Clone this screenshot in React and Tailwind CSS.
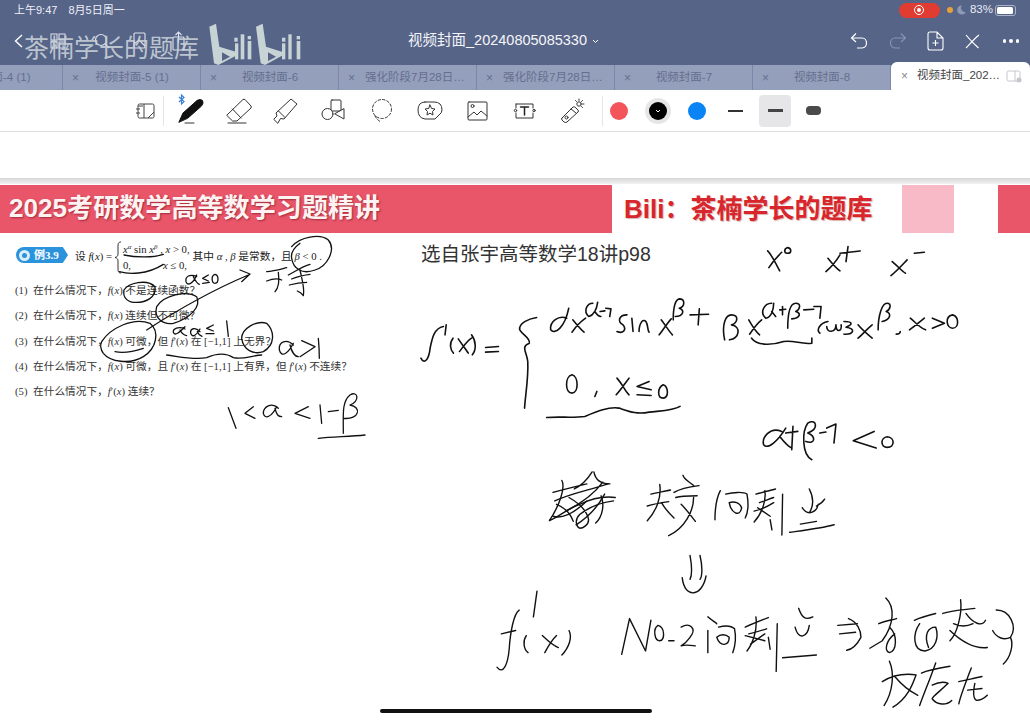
import React from 'react';

const tabs = [
  { t: '视频封面-5 (1)' },
  { t: '视频封面-6' },
  { t: '强化阶段7月28日…', long: true },
  { t: '强化阶段7月28日…', long: true },
  { t: '视频封面-7' },
  { t: '视频封面-8' },
];

const questions = [
  ['(1)', <>在什么情况下，<i>f</i>(<i>x</i>) 不是连续函数？</>],
  ['(2)', <>在什么情况下，<i>f</i>(<i>x</i>) 连续但不可微？</>],
  ['(3)', <>在什么情况下，<i>f</i>(<i>x</i>) 可微，但 <i>f</i>′(<i>x</i>) 在 [−1,1] 上无界？</>],
  ['(4)', <>在什么情况下，<i>f</i>(<i>x</i>) 可微，且 <i>f</i>′(<i>x</i>) 在 [−1,1] 上有界，但 <i>f</i>′(<i>x</i>) 不连续？</>],
  ['(5)', <>在什么情况下，<i>f</i>′(<i>x</i>) 连续？</>],
];

const Ico = ({ children, w = 26, h = 26 }) => (
  <svg width={w} height={h} viewBox={`0 0 ${w} ${h}`} fill="none" stroke="#333" strokeWidth="1" strokeLinecap="round" strokeLinejoin="round">
    {children}
  </svg>
);

const ToolIcons = [
  <Ico key="pen">
    <path d="M1 24 L5 15 L19 2.5 Q22 0.5 24.5 2.5 Q26 5 23.5 8 L10 20 Z" fill="#111" stroke="#111" />
    <path d="M7 25 H16" stroke="#333" />
  </Ico>,
  <Ico key="eraser">
    <path d="M1 17 L17 1.5 Q18 1 19 1.5 L25 8 Q25.5 9 25 10 L11 23 H7 Z" />
    <path d="M6.5 11 L15 20" />
    <path d="M2 25 H20" />
  </Ico>,
  <Ico key="highlighter">
    <path d="M1 21 L4 18 L3 15 L18 1 L24 6 L11 21 L7.5 20.5 L5 25 Z" />
    <path d="M5.5 13 L12 19.5" />
  </Ico>,
  <Ico key="shapes">
    <rect x="10" y="2" width="10" height="11" rx="1" />
    <circle cx="6.5" cy="16" r="5.5" fill="#fff" />
    <path d="M23 11 V21 L14 16 Z" fill="#fff" />
  </Ico>,
  <Ico key="lasso">
    <circle cx="13" cy="11" r="9.5" strokeDasharray="2.5 2" />
    <path d="M6 18 Q8 22 12 24" strokeDasharray="2.5 2" />
  </Ico>,
  <Ico key="sticker">
    <path d="M8 4 H17 Q25 4 25 12 Q25 15 22 17 L18 21 H8 Q1 20 1 12 Q1 4 8 4 Z" />
    <path d="M13 7 L14.6 10.5 L18 11 L15.5 13.5 L16 17 L13 15.2 L10 17 L10.5 13.5 L8 11 L11.4 10.5 Z" />
  </Ico>,
  <Ico key="image">
    <rect x="3" y="4" width="19" height="18" rx="1" />
    <circle cx="7.5" cy="8" r="1.5" />
    <path d="M3 19 L9 14 L12 17 L16 13 L22 18" />
  </Ico>,
  <Ico key="text">
    <path d="M4 6 H21 V10 M21 15 V20 H4 V15 M4 10 V6" />
    <circle cx="22" cy="12.5" r="1.2" />
    <circle cx="3.5" cy="12.5" r="1.2" />
    <path d="M8.5 9 H16.5 M12.5 9 V17" strokeWidth="1.5" stroke="#222" />
  </Ico>,
  <Ico key="laser">
    <path d="M2 20 L13 9 Q14 8 16 10 L18 12 Q19 13 18 14 L7 24 Q6 25 4 24 L2 22 Q1 21 2 20 Z" />
    <circle cx="6.5" cy="19.5" r="1.5" />
    <path d="M11 11 L16 15" />
    <circle cx="19" cy="6" r="2.2" />
    <path d="M19 1 V2.5 M24 6 H22.5 M22.5 2.5 L21.5 3.5 M15.5 2.5 L16.5 3.5 M22.5 9.5 L21.5 8.5" />
  </Ico>,
];

const Ink = ({ t, sx, sy, w = 1.6, d }) => (
  <g transform={`translate(${t}) scale(${sx} ${sy})`}>
    {d.map((p, i) => (
      <path key={i} d={p} fill="none" stroke="#111" strokeWidth={w} strokeLinecap="round" strokeLinejoin="round" vectorEffect="non-scaling-stroke" />
    ))}
  </g>
);

// strokes for the problem statement, coords from a 3x crop at (0,175)
const leftInk = [
  'M372 240 C410 248 460 248 490 238',
  'M358 290 C385 298 440 300 490 268',
  'M875 215 C900 185 960 175 985 195 C1010 225 980 275 945 285 C905 300 880 280 875 250 C872 235 880 220 900 205',
  'M590 305 C570 295 555 305 558 320 C562 335 580 325 590 300 M580 305 C585 315 590 325 598 328',
  'M625 300 L608 310 L625 318 M608 325 L628 322 M645 298 C632 302 635 325 645 325 C657 325 657 300 645 298',
  'M440 465 C540 400 650 340 745 300 M720 285 L750 297 L725 320',
  'M800 290 C825 288 850 280 860 278 M800 318 C815 312 835 310 845 315 M835 292 C838 315 835 340 825 350',
  'M865 300 C885 290 905 275 930 268 M875 312 C890 305 915 300 930 298 M868 330 C885 325 905 322 920 322 M900 285 C905 310 915 340 910 362 C905 355 898 350 892 348',
  'M372 345 C385 325 440 310 465 335 C470 365 440 385 400 382 C380 380 368 365 372 345',
  'M470 395 C490 360 560 345 590 365 C605 395 570 430 520 445 C490 450 460 430 470 395',
  'M305 500 C330 460 400 425 450 445 C480 470 470 520 430 545 C390 570 330 560 310 535 C300 520 300 510 305 500',
  'M345 530 C370 535 400 530 430 520',
  'M555 462 C535 452 518 462 520 472 C525 485 540 470 555 455 M540 465 C545 475 550 480 560 482',
  'M600 470 C585 455 570 460 572 475 C578 490 590 480 600 462 M592 470 C596 480 600 482 606 484',
  'M640 450 L620 460 L640 468 M618 476 L642 476 M680 438 L685 484',
  'M725 490 C725 460 770 435 800 445 C825 470 825 510 790 530 C760 540 730 525 725 490',
  'M500 540 C540 545 580 555 620 548 C650 535 680 535 700 548 C730 555 760 540 785 540',
  'M880 510 C860 490 835 500 838 525 C845 550 865 535 880 505 M870 510 C875 530 885 545 895 545',
  'M905 497 L945 515 L900 545 M955 490 C958 520 958 530 958 550',
  'M685 698 L708 760 M760 695 L735 715 L765 730',
  'M835 700 C815 680 790 695 790 715 C795 735 815 725 830 695 M825 700 C830 720 835 725 845 725',
  'M925 695 L885 715 L930 730 M960 690 L965 745 M985 710 L1015 706',
  'M1030 775 C1030 720 1025 680 1050 660 C1075 645 1080 680 1050 690 C1085 695 1080 735 1030 730',
  'M955 790 C1000 785 1050 785 1095 780',
];

// derivative on the right, coords from a crop at (400,175)
const rightInk = [
  'M915 228 C925 240 935 265 945 288 M950 232 C935 250 925 265 918 278 M965 218 C955 222 955 235 965 235 C975 235 975 220 965 218',
  'M1065 250 C1075 265 1085 280 1095 288 M1095 240 C1085 260 1070 280 1060 290 M1095 235 L1145 228 M1115 215 L1110 260',
  'M1225 260 C1240 275 1250 290 1258 295 M1262 255 C1250 270 1235 290 1222 302 M1280 235 L1305 232',
  'M52 550 C60 570 72 555 75 520 C80 490 85 460 108 455 M115 450 L112 480 M132 490 C122 505 125 525 133 535',
  'M145 492 C155 510 165 525 170 535 M178 490 C165 500 155 520 148 530 M178 480 C190 500 190 525 180 540 M213 518 L245 515 M213 532 L245 530',
  'M340 428 C320 432 295 445 298 465 C305 480 325 490 322 505 C300 515 315 530 318 560 C320 610 312 660 310 700',
  'M415 430 C395 420 372 440 375 465 C385 480 410 460 420 400 M430 435 C440 450 450 465 458 472 M462 430 C450 440 435 460 428 472',
  'M480 385 C465 385 455 410 470 425 C485 420 490 400 492 382 M485 410 C490 420 495 425 500 425 M498 410 L510 408 M512 400 L525 402 L522 425',
  'M565 420 C545 420 540 440 555 450 C565 465 555 478 540 470 M577 430 L580 470 M595 470 C595 445 605 430 612 440 C618 450 615 465 620 472',
  'M650 435 C660 450 670 470 678 480 M675 432 C665 445 655 465 645 480 M680 435 C680 400 685 375 695 372 C710 372 710 395 695 400 C710 405 705 425 685 425 M722 420 L768 418 M745 402 L742 450',
  'M808 495 C800 450 810 420 825 420 C845 420 840 445 825 450 C850 455 845 490 820 495 M868 435 C875 450 885 470 895 480 M900 435 C885 450 875 470 870 478',
  'M925 385 C905 385 895 415 910 430 C925 430 930 400 930 385 M925 410 L935 425 M945 405 L960 403 M952 395 L952 420 M965 460 C965 420 970 385 985 385 C1000 385 995 405 985 410 C1000 415 995 430 975 432 M1005 405 L1030 403 M1030 395 L1048 395 L1045 430',
  'M875 490 C890 515 930 510 955 500 C980 495 1000 510 1025 505 L1025 490',
  'M1065 440 C1045 445 1035 465 1045 475 M1062 455 C1062 475 1085 475 1085 450 C1085 475 1100 470 1098 450 M1105 440 C1130 440 1125 450 1110 457 C1135 460 1130 480 1105 478',
  'M1140 450 C1150 465 1165 480 1175 490 M1175 450 C1160 465 1150 480 1140 490 M1190 465 C1190 420 1200 385 1212 385 C1225 385 1220 405 1210 410 C1225 415 1220 435 1200 440 M1245 470 C1245 475 1240 478 1235 478',
  'M1270 430 C1285 445 1295 460 1308 465 M1305 430 C1290 445 1280 455 1268 465 M1325 430 L1355 445 L1325 460 M1375 420 C1355 425 1360 460 1375 460 C1392 460 1392 425 1375 420',
  'M428 600 C410 605 410 655 428 655 C445 655 445 605 428 600 M490 650 L485 665 M540 610 C555 630 560 650 570 660 M570 610 C560 625 550 645 538 660',
  'M620 620 L590 635 L625 645 M590 660 L625 662 M655 630 C640 640 640 670 655 670 C670 670 668 635 655 630',
  'M365 728 C400 725 430 730 460 725 C490 710 520 695 545 700 C570 710 590 720 620 712 C650 708 680 708 697 695',
  'M950 770 C920 755 900 790 905 810 C915 825 940 800 960 760 M945 785 C955 800 965 815 975 820 M960 775 L990 770 M978 755 L975 825',
  'M1025 855 C1000 840 1000 770 1015 745 C1035 730 1045 760 1015 775 C1035 785 1035 810 1010 800 M1045 775 L1060 772 M1062 760 L1085 748 L1080 805',
  'M1180 770 L1128 798 L1185 820 M1213 786 C1195 788 1195 818 1213 818 C1232 818 1232 788 1213 786',
];

// bottom notes, coords from a crop at (480,460)
const bottomInk = [
  'M205 95 C240 85 280 75 300 70 M230 60 C240 80 225 130 195 178 C225 165 250 140 280 130 C310 115 345 105 380 110 M320 35 C325 65 345 70 365 70 M315 35 C300 60 285 75 265 85',
  'M250 110 C275 125 300 145 305 175 C305 190 290 200 280 200 C270 195 265 175 280 160 C310 135 340 125 375 120 M340 105 C350 130 345 165 325 185 M215 130 C240 140 255 160 262 180',
  'M210 120 C250 100 300 90 360 70 M240 150 C280 130 320 100 345 65 M270 190 C300 170 330 140 350 100 M205 165 C235 175 270 150 300 120',
  'M480 100 C500 95 520 92 535 88 M470 135 C490 128 510 125 530 122 M505 72 C510 110 495 150 470 178 M510 125 C520 145 530 155 545 170',
  'M570 45 C575 60 590 65 600 75 M545 95 C560 85 590 78 615 75 M550 110 C565 105 585 105 610 105 M600 110 C600 150 575 200 530 222 M565 130 C580 145 590 160 605 180',
  'M660 175 C660 140 665 110 675 90 M690 100 C710 95 740 92 750 100 C755 130 755 150 745 170 M700 125 C705 155 730 170 735 140 C730 125 715 120 700 125',
  'M775 100 C790 95 815 90 830 85 M785 125 C800 120 810 115 825 110 M800 90 C805 120 790 160 770 182 M770 150 C790 145 810 135 825 125 M850 100 L848 220 M815 175 L820 205 M780 140 L815 165',
  'M925 85 C935 105 940 130 925 155 M945 135 C955 130 965 120 968 115 M905 140 C920 165 945 155 950 130 M900 188 L945 180 M870 212 C920 205 960 200 995 190',
  'M590 280 C595 310 595 340 590 350 M618 280 C625 310 625 340 618 350 M568 345 C575 410 625 400 635 340',
  'M48 608 C65 630 78 600 82 555 C85 505 95 450 110 440 M60 510 L100 500 M160 385 L150 460',
  'M130 515 C120 530 122 555 135 565 M175 515 C190 530 205 545 220 550 M215 515 C200 530 190 550 182 565 M250 500 C260 520 250 550 230 572',
  'M398 570 L420 465 L465 560 L480 470',
  'M500 485 C485 495 490 530 505 530 C520 530 520 490 500 485 M530 530 L545 530 M565 490 C590 475 610 495 590 520 C580 535 565 545 565 545 C580 540 600 545 605 545',
  'M640 460 C650 470 660 475 665 480 M640 500 C640 530 640 550 640 565 M670 490 C690 485 705 485 715 495 C720 520 715 550 710 565 M665 520 C675 550 700 545 700 520 C690 510 675 510 665 520',
  'M745 490 C765 480 790 470 810 462 M755 510 C775 505 790 500 805 495 M775 460 C780 500 765 540 750 560 M745 515 L800 530 M835 480 L832 620 M810 520 L815 555 M760 540 L800 510',
  'M895 435 C905 465 915 470 935 460 M885 490 C895 530 920 520 925 485 M850 580 L945 572',
  'M1005 485 L1060 480 M1010 510 L1055 505 M1035 465 C1060 475 1070 500 1070 520 C1060 540 1045 555 1030 558',
  'M1140 405 C1165 430 1165 480 1130 530 L1095 552 M1120 480 C1140 470 1155 470 1170 465 M1150 490 C1175 515 1170 560 1150 565 C1135 560 1140 530 1165 510',
  'M1220 470 C1240 460 1260 455 1280 450 M1235 480 C1215 510 1215 560 1250 560 C1280 555 1290 520 1280 490 C1260 490 1245 510 1260 550',
  'M1300 450 C1330 440 1360 440 1390 435 M1350 410 C1355 450 1340 510 1320 530 M1320 500 C1340 520 1380 555 1425 550 M1365 450 C1385 480 1410 490 1420 470 M1330 480 C1350 490 1365 490 1385 480',
  'M1440 500 C1450 520 1470 530 1490 520 C1510 490 1490 440 1450 440 M1490 520 C1500 540 1490 580 1470 598',
  'M1150 590 C1165 625 1160 680 1135 720 M1130 650 C1160 630 1190 625 1225 630 C1215 660 1200 700 1160 725 M1165 635 C1185 660 1210 680 1230 690',
  'M1240 625 C1260 615 1290 610 1320 605 M1280 595 C1265 640 1245 690 1235 720 M1270 660 C1290 650 1305 650 1315 655 C1290 680 1270 695 1270 700 C1285 720 1310 720 1325 705',
  'M1345 650 C1365 645 1390 640 1410 635 M1380 610 C1365 650 1350 690 1345 715 M1390 655 C1385 680 1385 700 1395 705 C1405 705 1415 700 1425 690 M1370 675 L1410 670',
];

const App = () => (
  <div className="relative flex h-[720px] w-[1030px] flex-col overflow-hidden bg-white font-['Liberation_Sans','Noto_Sans_CJK_SC',sans-serif]">
    {/* top bar */}
    <div className="h-[65px] bg-[#566488] px-[14px] text-white">
      <div className="flex h-[20px] items-center justify-between">
        <span className="flex gap-[11px] text-[11px] text-[#eef0f6]"><span>上午9:47</span><span>8月5日周一</span></span>
        <div className="flex items-center">
          <div className="mr-[7px] flex h-[15px] w-[41px] items-center justify-center rounded-full bg-[#e03c31]">
            <div className="flex h-[10px] w-[10px] items-center justify-center rounded-full border border-white">
              <div className="h-[4px] w-[4px] rounded-full bg-white" />
            </div>
          </div>
          <div className="mr-[4px] h-[6px] w-[6px] rounded-full bg-[#e8a13a]" />
          <svg width="9" height="10" viewBox="0 0 9 10" className="mr-[4px]"><path d="M5 0.5 A4.5 4.5 0 1 0 8.8 7 A4 4 0 0 1 5 0.5 Z" fill="#8e99b5" /></svg>
          <span className="mr-[2px] text-[11.5px] text-[#e8ebf3]">83%</span>
          <div className="flex h-[11px] w-[21px] items-center rounded-[3px] border border-[#aab3ca] p-[1px]">
            <div className="h-full w-[16px] rounded-[1.5px] bg-white" />
          </div>
        </div>
      </div>
      <div className="flex h-[42px] items-center justify-between">
        <div className="flex items-center">
          <svg width="9" height="14" viewBox="0 0 9 14" className="mr-[27px]"><path d="M8 1 L1.5 7 L8 13" fill="none" stroke="#fff" strokeWidth="1.4" /></svg>
          <svg width="16" height="16" viewBox="0 0 16 16" className="mr-[28px]" fill="none" stroke="#dfe3ee"><rect x="1" y="1" width="6" height="6" /><rect x="9" y="1" width="6" height="6" /><rect x="1" y="9" width="6" height="6" /><rect x="9" y="9" width="6" height="6" /></svg>
          <svg width="16" height="16" viewBox="0 0 16 16" className="mr-[23px]" fill="none" stroke="#dfe3ee" strokeWidth="1.2"><circle cx="7" cy="7" r="5.5" /><path d="M11 11 L15 15" /></svg>
          <svg width="14" height="18" viewBox="0 0 14 18" className="mr-[25px]" fill="none" stroke="#dfe3ee" strokeWidth="1.1"><rect x="1" y="1" width="11" height="15" rx="1" /><path d="M1 12 L6 8 L12 14" /></svg>
          <svg width="14" height="20" viewBox="0 0 14 20" fill="none" stroke="#dfe3ee" strokeWidth="1.1"><rect x="1" y="6" width="11" height="13" rx="1" /><path d="M6.5 12 V1 M3.5 4 L6.5 1 L9.5 4" /></svg>
        </div>
        <div className="absolute left-[408px] flex items-center text-[14.5px] text-[#f4f5f9]">
          <span>视频封面_20240805085330</span>
          <svg width="7" height="5" viewBox="0 0 7 5" className="ml-[5px]"><path d="M1 1 L3.5 3.5 L6 1" fill="none" stroke="#fff" strokeWidth="1" /></svg>
        </div>
        <div className="-mr-[3px] flex items-center">
          <svg width="18" height="18" viewBox="0 0 18 18" className="mr-[21px]" fill="none" stroke="#fff" strokeWidth="1.2"><path d="M6 1.5 L1.5 6 L6 10 M1.5 6 H12 C18 6 18 16 12 16 H7" /></svg>
          <svg width="18" height="18" viewBox="0 0 18 18" className="mr-[20px]" fill="none" stroke="#8794b3" strokeWidth="1.2"><path d="M12 1.5 L16.5 6 L12 10 M16.5 6 H6 C0 6 0 16 6 16 H11" /></svg>
          <svg width="17" height="20" viewBox="0 0 17 20" className="mr-[21px]" fill="none" stroke="#fff" strokeWidth="1.1"><path d="M1 3 Q1 1 3 1 H10 L16 7 V17 Q16 19 14 19 H3 Q1 19 1 17 Z M10 1 V7 H16 M8.5 9 V15 M5.5 12 H11.5" /></svg>
          <svg width="15" height="15" viewBox="0 0 15 15" className="mr-[23px]" fill="none" stroke="#fff" strokeWidth="1.2"><path d="M1 1 C5 6 9 10 13.5 14 M14 1 C9 5 5 10 1 14" /></svg>
          <div className="flex gap-[3px]">
            <div className="h-[3.5px] w-[3.5px] rounded-full bg-white" />
            <div className="h-[3.5px] w-[3.5px] rounded-full bg-white" />
            <div className="h-[3.5px] w-[3.5px] rounded-full bg-white" />
          </div>
        </div>
      </div>
    </div>

    {/* watermark */}
    <div className="absolute left-[24px] top-[32px] text-[25px] leading-[32px] text-[#c9d2d8]/90">茶楠学长的题库</div>
    <svg width="110" height="55" viewBox="0 0 330 165" className="absolute left-[200px] top-[15px]" fill="#c8d3d6">
      <path fillRule="evenodd" d="M28 35 L48 26 L58 95 L112 112 L112 120 L55 150 L42 145 Z M66 112 L66 138 L90 125 Z" />
      <rect x="103" y="68" width="10" height="12" />
      <rect x="105" y="85" width="10" height="48" />
      <rect x="122" y="58" width="11" height="75" />
      <rect x="143" y="63" width="10" height="10" />
      <rect x="143" y="78" width="11" height="55" />
      <path fillRule="evenodd" d="M168 35 L188 26 L198 95 L250 112 L250 120 L195 150 L182 145 Z M204 112 L204 138 L228 125 Z" />
      <rect x="246" y="68" width="10" height="12" />
      <rect x="246" y="85" width="10" height="48" />
      <rect x="265" y="58" width="10" height="75" />
      <rect x="290" y="63" width="10" height="10" />
      <rect x="290" y="78" width="11" height="55" />
    </svg>

    {/* tabs */}
    <div className="flex h-[25px] bg-[#949fbc] text-[11.5px] text-[#646f8e]">
      <div className="flex w-[63px] items-center overflow-hidden border-r border-[#7c88a8]">
        <span className="-ml-[20px] whitespace-nowrap">封面-4 (1)</span>
      </div>
      {tabs.map((tab, i) => (
        <div key={i} className="flex w-[138px] items-center overflow-hidden border-r border-[#7c88a8] pl-[9px]">
          <span className="w-[20px] text-[12px]">×</span>
          {tab.long ? (
            <span className="-ml-[3px] whitespace-nowrap">{tab.t}</span>
          ) : (
            <span className="w-[80px] whitespace-nowrap text-center">{tab.t}</span>
          )}
        </div>
      ))}
      <div className="z-10 -mt-[3px] flex h-[28px] w-[139px] items-center rounded-t-[6px] bg-white pl-[10px] text-[#444]">
        <span className="mr-[9px] text-[12px] text-[#888]">×</span>
        <span className="text-[11.5px] whitespace-nowrap">视频封面_202…</span>
        <svg width="16" height="13" viewBox="0 0 16 13" className="ml-[6px]" fill="none" stroke="#c4c6cc"><rect x="1" y="1" width="13" height="10" rx="1.5" /><path d="M9 1 V11" /><circle cx="13" cy="10" r="2.5" fill="#c4c6cc" stroke="none" /></svg>
      </div>
    </div>

    {/* toolbar */}
    <div className="flex h-[42px] items-center border-b border-[#ddd] pl-[135px]">
      <svg width="20" height="18" viewBox="0 0 20 18" className="mr-[8px]" fill="none" stroke="#444" strokeWidth="1"><rect x="3" y="2" width="16" height="14" rx="1.5" /><path d="M9 2 V16 M13 16 L19 10 M1 7 H5 M1 11 H5 M3 4 H8" /></svg>
      <div className="mr-[3px] h-[30px] w-px bg-[#e5e5e5]" />
      <div className="relative flex">
        <svg width="7" height="11" viewBox="0 0 7 11" className="absolute left-[11px] -top-[4px]" fill="none" stroke="#3b82d6" strokeWidth="1.2"><path d="M1 3 L6 7.5 L3.5 10 V1 L6 3.5 L1 8" /></svg>
        {ToolIcons.map((ic) => (
          <div key={ic.key} className="flex w-[47.8px] justify-center">{ic}</div>
        ))}
      </div>
      <div className="ml-[5px] h-[30px] w-px bg-[#e5e5e5]" />
      <div className="ml-[6px] flex items-center">
        <div className="flex w-[19px] justify-center"><div className="h-[18px] w-[18px] rounded-full bg-[#f2555a]" /></div>
        <div className="ml-[17px] flex h-[26px] w-[26px] items-center justify-center rounded-full bg-[#e6e6e6]">
          <div className="flex h-[18px] w-[18px] items-center justify-center rounded-full bg-black">
            <svg width="6" height="4" viewBox="0 0 6 4"><path d="M1 1 L3 3 L5 1" fill="none" stroke="#fff" /></svg>
          </div>
        </div>
        <div className="ml-[17px] h-[18px] w-[18px] rounded-full bg-[#0a84f5]" />
        <div className="ml-[22px] h-[2px] w-[15px] bg-[#333]" />
        <div className="ml-[16px] flex h-[32px] w-[32px] items-center justify-center rounded-[4px] bg-[#e6e6e8]">
          <div className="h-[2.5px] w-[15px] bg-[#444]" />
        </div>
        <div className="ml-[15px] h-[9px] w-[15px] rounded-[4px] bg-[#4a4a4a]" />
      </div>
    </div>

    {/* blank strip above the page */}
    <div className="h-[46px] bg-white" />
    <div className="h-[6px] bg-gradient-to-b from-[#d8d8d8] to-[#f2f2f2]" />

    {/* banner */}
    <div className="mt-px flex h-[48px] items-stretch">
      <div className="flex w-[612px] items-center bg-[#e9566a] pl-[9px] text-[26.1px] font-bold text-[#fdf3f3] [text-shadow:1px_1px_2px_rgba(90,0,10,0.5)]">
        2025考研数学高等数学习题精讲
      </div>
      <div className="flex w-[290px] items-center pl-[12px] text-[26px] font-bold text-[#d8262c] [text-shadow:1px_1px_1px_rgba(120,0,0,0.3)]">
        Bili：茶楠学长的题库
      </div>
      <div className="w-[52px] bg-[#f8bac6]" />
      <div className="w-[44px]" />
      <div className="flex-1 bg-[#e9566a]" />
    </div>

    {/* page body */}
    <div className="flex flex-1 text-[#222]">
      <div className="w-[421px] pl-[16px] pt-[6px] font-['Liberation_Serif','Noto_Sans_CJK_SC',serif] text-[10.7px]">
        <div className="flex h-[36px] items-center">
          <div className="-mt-[4px] flex h-[16px] w-[52px] items-center rounded-l-full bg-[#2b93dc] text-[11px] font-bold text-white [clip-path:polygon(0_0,90%_0,100%_50%,90%_100%,0_100%)]">
            <div className="ml-[3px] mr-[4px] h-[11px] w-[11px] rounded-full border-[3px] border-[#d8eefa]" />
            例3.9
          </div>
          <span className="ml-[7px] -mt-[2px]">设 <i>f</i>(<i>x</i>) =</span>
          <svg width="8" height="33" viewBox="0 0 8 33" className="ml-[2px]" fill="none" stroke="#333"><path d="M7 1 C4 1 4 3 4 6 V13 C4 15 3 16 1 16.5 C3 17 4 18 4 20 V27 C4 30 4 32 7 32" /></svg>
          <div className="ml-[1px] flex h-[31px] flex-col justify-between leading-[15px]">
            <span><i>x<sup className="text-[7px]">α</sup></i> sin <i>x<sup className="text-[7px]">β</sup></i> , <i>x</i> &gt; 0,</span>
            <span>0,<span className="ml-[32px]"><i>x</i> ≤ 0,</span></span>
          </div>
          <span className="ml-[3px] -mt-[2px] whitespace-nowrap">其中 <i>α</i> , <i>β</i> 是常数，且 <i>β</i> &lt; 0 .</span>
        </div>
        <div className="-ml-[1px] mt-[7px] flex flex-col gap-[9px] leading-[16.3px] text-[#333]">
          {questions.map(([n, q]) => (
            <div key={n} className="flex whitespace-nowrap">
              <span className="w-[18px]">{n}</span>
              <span>{q}</span>
            </div>
          ))}
        </div>
      </div>
      <div className="pt-[9px] text-[19.5px] leading-[24px] text-[#333]">选自张宇高等数学18讲p98</div>
    </div>

    {/* ink layer */}
    <svg width="1030" height="720" viewBox="0 0 1030 720" className="pointer-events-none absolute left-0 top-0">
      <Ink t="0 175" sx={1 / 3} sy={1 / 3} w={1.3} d={leftInk} />
      <Ink t="400 175" sx={0.4018} sy={0.333} w={1.6} d={rightInk} />
      <Ink t="480 460" sx={0.356} sy={0.341} w={1.4} d={bottomInk} />
    </svg>

    {/* home indicator */}
    <div className="absolute left-[380px] top-[709px] h-[4px] w-[272px] rounded-full bg-[#111]" />
  </div>
);

export default App;
